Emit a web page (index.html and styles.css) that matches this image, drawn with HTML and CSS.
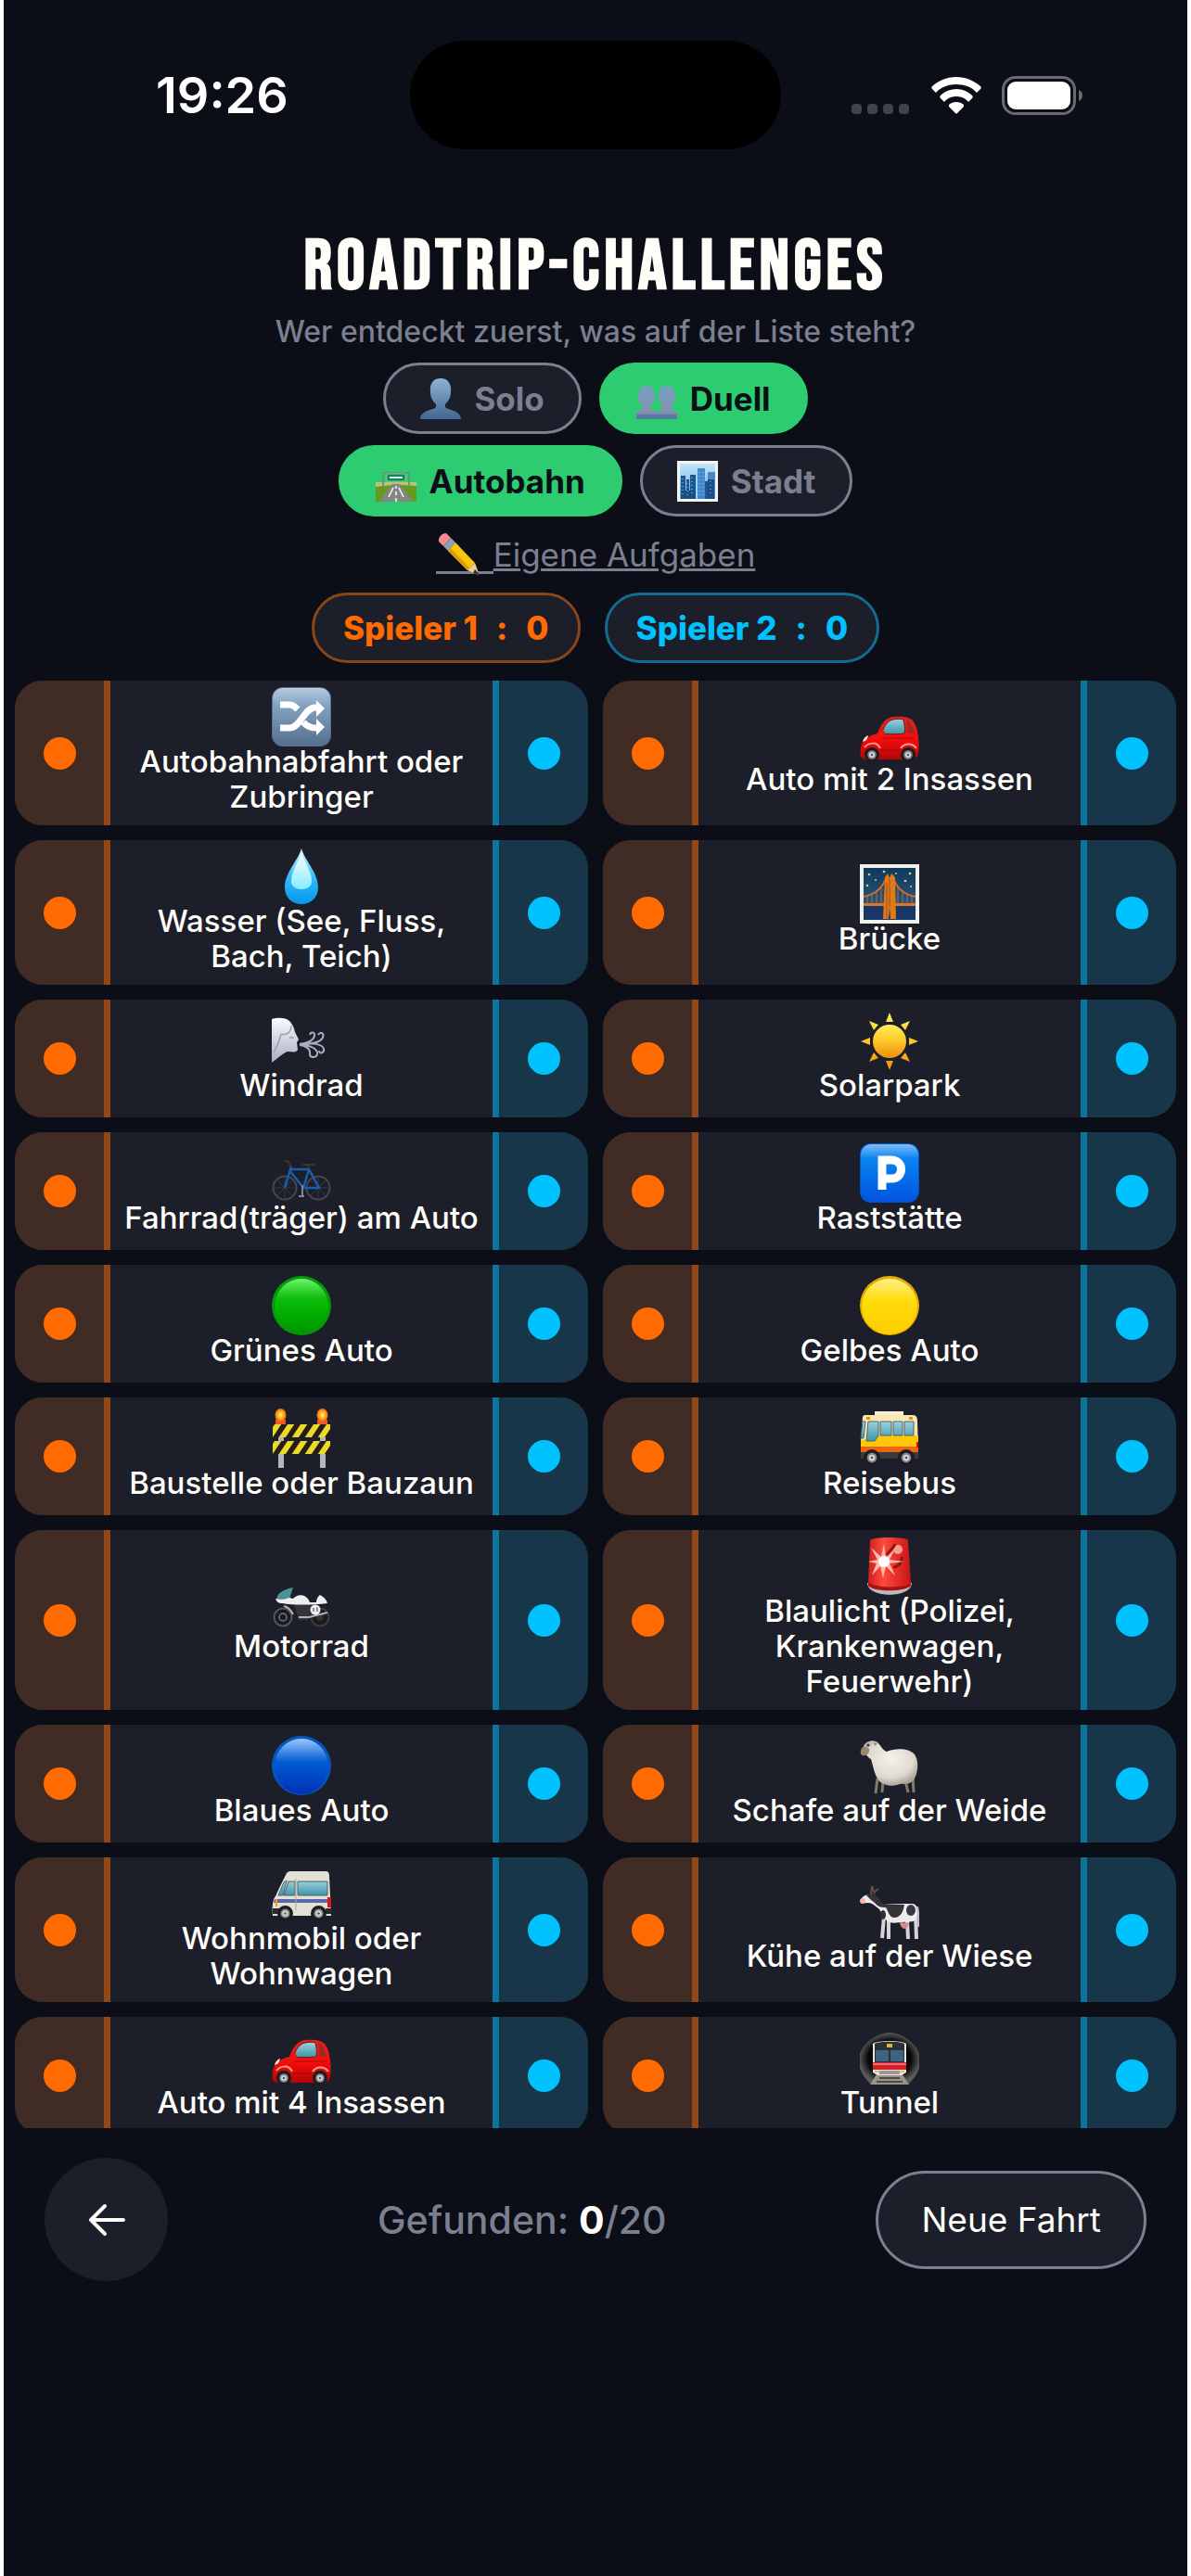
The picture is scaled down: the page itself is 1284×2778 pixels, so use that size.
FILE: index.html
```html
<!DOCTYPE html>
<html lang="de">
<head>
  <meta charset="utf-8">
  <meta name="viewport" content="width=device-width, initial-scale=1">
  <title>Roadtrip-Challenges</title>
  <link rel="stylesheet" href="styles.css">
</head>
<body>
  <!-- shared gradients and symbols -->
  <svg class="sprite" aria-hidden="true">
    <defs>
      <linearGradient id="gSteel" x1="0" y1="0" x2="0" y2="1"><stop offset="0" stop-color="#b9cbe0"/><stop offset=".3" stop-color="#83a2c2"/><stop offset="1" stop-color="#56718f"/></linearGradient>
      <linearGradient id="gPerson" x1="0" y1="0" x2="0" y2="1"><stop offset="0" stop-color="#8db3d3"/><stop offset="1" stop-color="#426790"/></linearGradient>
      <linearGradient id="gPair" x1="0" y1="0" x2="0" y2="1"><stop offset="0" stop-color="#76a1c4"/><stop offset=".8" stop-color="#8790b0"/><stop offset="1" stop-color="#4a6f98"/></linearGradient>
      <linearGradient id="gGreen" x1="0" y1="0" x2="0" y2="1"><stop offset="0" stop-color="#6cf56c"/><stop offset=".35" stop-color="#0fbd0a"/><stop offset=".6" stop-color="#00b000"/><stop offset="1" stop-color="#009400"/></linearGradient>
      <linearGradient id="gYellow" x1="0" y1="0" x2="0" y2="1"><stop offset="0" stop-color="#fff08a"/><stop offset=".4" stop-color="#ffdb0a"/><stop offset="1" stop-color="#ffcd00"/></linearGradient>
      <linearGradient id="gBlue" x1="0" y1="0" x2="0" y2="1"><stop offset="0" stop-color="#9cc6fb"/><stop offset=".42" stop-color="#005cd2"/><stop offset="1" stop-color="#0031b4"/></linearGradient>
      <linearGradient id="gPark" x1="0" y1="0" x2="0" y2="1"><stop offset="0" stop-color="#7dbdfa"/><stop offset=".25" stop-color="#0a84f0"/><stop offset="1" stop-color="#0053e0"/></linearGradient>
      <linearGradient id="gSun" x1="0" y1="0" x2="0" y2="1"><stop offset="0" stop-color="#ffec5e"/><stop offset=".45" stop-color="#fdcb2b"/><stop offset="1" stop-color="#ef8f10"/></linearGradient>
      <linearGradient id="gGlass" x1="0" y1="0" x2="0" y2="1"><stop offset="0" stop-color="#9ad3de"/><stop offset="1" stop-color="#3f94a9"/></linearGradient>
      <linearGradient id="gRed" x1="0" y1="0" x2="0" y2="1"><stop offset="0" stop-color="#d8261c"/><stop offset=".5" stop-color="#f80d0d"/><stop offset="1" stop-color="#b30505"/></linearGradient>
      <linearGradient id="gDrop" x1="0" y1="0" x2="0" y2="1"><stop offset="0" stop-color="#d8f7ff"/><stop offset=".5" stop-color="#35bdf5"/><stop offset="1" stop-color="#0796f0"/></linearGradient>
      <linearGradient id="gShine" x1="0" y1="0" x2="0" y2="1"><stop offset="0" stop-color="#fff"/><stop offset="1" stop-color="#86ecff"/></linearGradient>
      <linearGradient id="gNight" x1="0" y1="0" x2="0" y2="1"><stop offset="0" stop-color="#0d3a5c"/><stop offset=".7" stop-color="#2a5679"/><stop offset="1" stop-color="#162f66"/></linearGradient>
      <linearGradient id="gCity" x1="0" y1="0" x2="0" y2="1"><stop offset="0" stop-color="#c5e6fb"/><stop offset="1" stop-color="#5ea6dc"/></linearGradient>
      <linearGradient id="gFace" x1="0" y1="0" x2="0" y2="1"><stop offset="0" stop-color="#fbfbff"/><stop offset="1" stop-color="#a9adbe"/></linearGradient>
      <linearGradient id="gSiren" x1="0" y1="0" x2="1" y2="0"><stop offset="0" stop-color="#c81e1e"/><stop offset=".35" stop-color="#ff4a3c"/><stop offset="1" stop-color="#c71515"/></linearGradient>
      <radialGradient id="gWool" cx=".5" cy=".4" r=".6"><stop offset="0" stop-color="#f5f2ec"/><stop offset=".7" stop-color="#dedad0"/><stop offset="1" stop-color="#a9a49b"/></radialGradient>
      <radialGradient id="gTube"><stop offset="0" stop-color="#000"/><stop offset=".7" stop-color="#0a0a0a"/><stop offset="1" stop-color="#5a5a5a"/></radialGradient>
      <radialGradient id="gLamp"><stop offset="0" stop-color="#fff7a0"/><stop offset=".5" stop-color="#ffb417"/><stop offset="1" stop-color="#f0680a"/></radialGradient>
      <clipPath id="cBoard"><path d="M1 17h62v14H1zM1 35h62v14H1z"/></clipPath>
      <symbol id="wheel" viewBox="0 0 16 16"><circle cx="8" cy="8" r="8" fill="#1d1d20"/><circle cx="8" cy="8" r="4.8" fill="#85878c"/><circle cx="8" cy="8" r="3" fill="#d4d5d8"/><circle cx="8" cy="8" r="1.2" fill="#55575c"/></symbol>
      <symbol id="car" viewBox="0 0 64 64">
        <path d="M1 51c-1-8 0-15 5-19 4-3 8-5 13-6C23 15 28 9 36 8c9-1 17 0 21 4 4 5 5 11 6 18 1 8 1 15-1 21l-6 3H5z" fill="url(#gRed)"/>
        <path d="M24 25c2-7 6-13 12-14 4-1 8-1 11 0 1 5 2 10 1 15-8 1-16 1-24 0z" fill="url(#gGlass)" stroke="#7b1515" stroke-width="1"/>
        <path d="M50 11c4 2 7 7 9 15h-8c1-5 0-10-1-15z" fill="#9b2a26"/>
        <path d="M5 41c4-5 13-7 17 1M44 42c4-6 13-6 17 0" fill="none" stroke="#ff9d8c" stroke-width="2"/>
        <path d="M3 35c1-4 3-6 6-7-1 4-2 6-6 7z" fill="#ffe3dc"/>
        <ellipse cx="24" cy="26" rx="3" ry="3.500" fill="#ef1515"/>
        <path d="M22 44h21M24 31h34" stroke="#a90808" stroke-width="1"/>
        <use href="#wheel" x="5" y="41" width="16" height="16"/><use href="#wheel" x="44" y="41" width="16" height="16"/>
      </symbol>
    </defs>
  </svg>

  <div class="screen">
    <div class="status-bar">
      <span class="time">19:26</span>
      <span class="island"></span>
      <span class="status-icons">
        <svg width="64" height="42" viewBox="0 0 64 42" fill="#424347"><rect y="30" width="11" height="11" rx="4"/><rect x="17" y="30" width="11" height="11" rx="4"/><rect x="34" y="30" width="11" height="11" rx="4"/><rect x="51" y="30" width="11" height="11" rx="4"/></svg>
        <svg width="54" height="42" viewBox="0 0 54 42" fill="#fff"><path d="M27 1c10 0 19 4 26 10 1 1 1 2 0 3l-4 4c-5-6-13-9-22-9S10 12 5 18l-4-4c-1-1-1-2 0-3C8 5 17 1 27 1z"/><path d="M27 14c7 0 13 3 17 7 1 1 1 2 0 3l-4 4c-3-4-8-6-13-6s-10 2-13 6l-4-4c-1-1-1-2 0-3 4-4 10-7 17-7z"/><path d="M27 28c3 0 6 1 8 3v2l-7 7c-1 1-1 1-2 0l-7-7v-2c2-2 5-3 8-3z"/></svg>
        <svg width="88" height="42" viewBox="0 0 88 42"><rect x="1.500" y="1.500" width="77" height="39" rx="13" fill="none" stroke="#6a6b70" stroke-width="3"/><rect x="6" y="6" width="68" height="30" rx="9" fill="#fff"/><path d="M83 15c3 1 4 3 4 6s-1 5-4 6z" fill="#6a6b70"/></svg>
      </span>
    </div>

    <header class="header">
      <h1>ROADTRIP-CHALLENGES</h1>
      <p class="subtitle">Wer entdeckt zuerst, was auf der Liste steht?</p>
      <div class="pill-row">
        <button type="button" class="pill" aria-pressed="false">
          <svg class="pill-icon" viewBox="0 0 44 44"><path d="M22 0c8 0 12 6 11 15 0 6-3 10-6 13v3c1 3 17 3 17 13H0c0-10 16-10 17-13v-3c-3-3-6-7-6-13C10 6 14 0 22 0z" fill="url(#gPerson)"/></svg>
          Solo
        </button>
        <button type="button" class="pill active" aria-pressed="true">
          <svg class="pill-icon" viewBox="0 0 44 44"><path d="M11 8c6 0 9 5 9 11 0 5-2 8-4 10v4c1 1 5 2 6 3 1-1 5-2 6-3v-4c-2-2-4-5-4-10 0-6 3-11 9-11s9 5 9 11c0 5-2 8-4 10v4c2 2 6 2 6 5v6H0v-6c0-3 4-3 6-5v-4c-2-2-4-5-4-10C2 13 5 8 11 8z" fill="url(#gPair)"/><path d="M0 39h44v5H0z" fill="#587aa3"/></svg>
          Duell
        </button>
      </div>
      <div class="pill-row">
        <button type="button" class="pill active" aria-pressed="true">
          <svg class="pill-icon" viewBox="0 0 44 44"><path d="M0 23h44v21H0z" fill="#68981f"/><path d="M0 23h44v4l-18-1h-8L0 28z" fill="#c3bf73"/><path d="M18 25h8l14 19H4z" fill="#858585"/><path d="M22 27v3M22 33v4M22 40v4M19 29l-5 10M25 29l5 10" stroke="#fff" stroke-width="1.500"/><path d="M8 28V13h28v15" fill="none" stroke="#5e9a77" stroke-width="2"/><path d="M12 14h20v8H12z" fill="#138656" stroke="#86c9a4"/><path d="M15 18h14" stroke="#d5f2e2" stroke-width="2"/></svg>
          Autobahn
        </button>
        <button type="button" class="pill" aria-pressed="false">
          <svg class="pill-icon" viewBox="0 0 44 44"><path d="M0 0h44v44H0z" fill="#f4f4f4"/><path d="M3 3h38v38H3z" fill="url(#gCity)"/><path d="M4 16h5v25H4zM10 20h3v21h-3zM14 15h6v26h-6zM29 22h5v19h-5z" fill="#1d5593"/><path d="M22 8h8v33h-8zM33 12h8v29h-8z" fill="#4189c9"/><path d="M33 20h7v21h-7zM4 32h17v9H4z" fill="#1c4c85"/><path d="M20 19h2v22h-2z" fill="#8fd8ff"/><path d="M6 19v18M16 18v18M24 12v26M28 12v26M36 22v16M11 24v14" stroke="#a8d4f5" stroke-width="1" stroke-dasharray="1 3"/></svg>
          Stadt
        </button>
      </div>
      <!-- the icon carries its own piece of the underline -->
      <a class="custom-link" href="#"><svg class="pencil" viewBox="0 0 62 52"><path d="M0 44h62v3H0z" fill="#7b7f90"/><path d="M3 12c-1-4 3-9 8-9l5 5-8 9z" fill="#f4898d"/><path d="M8 17l8-9 5 5-8 9z" fill="#8ba0b4"/><path d="M13 22l8-9 21 22-8 8z" fill="#fbc50b"/><path d="M13 22l3-3 21 22-3 2z" fill="#e19b05"/><path d="M42 35l-8 8 11 5c1 0 2-1 1-2z" fill="#efcb92"/><path d="M46 46l-4-4-2 4 5 2c1 0 2-1 1-2z" fill="#353535"/></svg>Eigene Aufgaben</a>
      <div class="score-row">
        <div class="score player-one"><span>Spieler 1</span><span>:</span><span>0</span></div>
        <div class="score player-two"><span>Spieler 2</span><span>:</span><span>0</span></div>
      </div>
    </header>

    <ul class="board">
      <li class="card">
        <button type="button" class="side side-one" aria-label="Spieler 1"></button>
        <div class="task">
          <svg class="task-icon" viewBox="0 0 64 64"><rect width="64" height="64" rx="12" fill="#56708d"/><rect x="1" y="1" width="62" height="61" rx="11" fill="url(#gSteel)"/><path d="M9 20h10c4 0 6 2 9 5M9 45h10c12 0 16-22 28-22h3M34 39c4 4 7 6 13 6h3" transform="translate(0 -1)" fill="none" stroke="#fff" stroke-width="7"/><path d="M48 14l9 9-9 9zM48 34l9 9-9 9z" fill="#fff"/></svg>
          <span>Autobahnabfahrt oder Zubringer</span>
        </div>
        <button type="button" class="side side-two" aria-label="Spieler 2"></button>
      </li>
      <li class="card">
        <button type="button" class="side side-one" aria-label="Spieler 1"></button>
        <div class="task">
          <svg class="task-icon" viewBox="0 0 64 64"><use href="#car" y="5" width="64" height="64"/></svg>
          <span>Auto mit 2 Insassen</span>
        </div>
        <button type="button" class="side side-two" aria-label="Spieler 2"></button>
      </li>
      <li class="card">
        <button type="button" class="side side-one" aria-label="Spieler 1"></button>
        <div class="task">
          <svg class="task-icon" viewBox="0 0 64 64"><path d="M32 2c3 12 18 26 18 42 0 11-8 18-18 18s-18-7-18-18C14 28 29 14 32 2z" fill="url(#gDrop)"/><path d="M32 6c2 9 11 20 11 31 0 6-5 9-11 9s-11-3-11-9c0-11 9-22 11-31z" fill="url(#gShine)"/></svg>
          <span>Wasser (See, Fluss, Bach, Teich)</span>
        </div>
        <button type="button" class="side side-two" aria-label="Spieler 2"></button>
      </li>
      <li class="card">
        <button type="button" class="side side-one" aria-label="Spieler 1"></button>
        <div class="task">
          <svg class="task-icon" viewBox="0 0 64 64"><path d="M0 0h64v64H0z" fill="#f3f1ee"/><path d="M4 4h56v56H4z" fill="url(#gNight)"/><path d="M4 44h56v16H4z" fill="#183667"/><path d="M4 35C16 33 25 25 29 13M60 35C48 33 39 25 35 13" fill="none" stroke="#d96a28" stroke-width="2"/><path d="M8 34v9M13 32v11M18 28v15M23 24v19M41 24v19M46 28v15M51 32v11M56 34v9" stroke="#b96c3c" stroke-width="1"/><path d="M4 42h56v3H4z" fill="#d9762a"/><path d="M27 14l3-4 2 5 2-5 4 4 1 45h-6l-1-13-1 13h-6z" fill="#e07a17"/><path d="M32 16v30M29 20v38" stroke="#a34c0c" stroke-width="1"/><g fill="#e5cf5a"><circle cx="10" cy="11" r="1.300"/><circle cx="26" cy="8" r="1.300"/><circle cx="39" cy="10" r="1"/><circle cx="54" cy="10" r="1.300"/><circle cx="49" cy="18" r="1.300"/><circle cx="8" cy="23" r="1.300"/><circle cx="17" cy="17" r="1"/><circle cx="55" cy="24" r="1"/></g></svg>
          <span>Brücke</span>
        </div>
        <button type="button" class="side side-two" aria-label="Spieler 2"></button>
      </li>
      <li class="card">
        <button type="button" class="side side-one" aria-label="Spieler 1"></button>
        <div class="task">
          <svg class="task-icon" viewBox="0 0 64 64"><path d="M0 9c6-2 15-2 19 2 3 3 5 7 6 12l4 8-2 3 1 8c-2 4-7 2-11 2-5 2-9 6-17 12z" fill="url(#gFace)"/><path d="M10 25c6 2 11-2 11-9M10 25c-2 8-4 14-8 20M19 29h5" fill="none" stroke="#9a9fb2" stroke-width="1.500"/><g fill="none" stroke="#a9adbb" stroke-width="2"><path d="M30 36c8-1 15-4 16-9 1-4-4-5-5-1M30 36c12 0 22-1 25-7 2-5-3-7-5-3M30 37c7 1 12 4 11 10 0 4 7 4 8 0 1-5-7-11-19-10M32 36c10-2 23 0 24 5 1 5-5 6-5 2"/></g></svg>
          <span>Windrad</span>
        </div>
        <button type="button" class="side side-two" aria-label="Spieler 2"></button>
      </li>
      <li class="card">
        <button type="button" class="side side-one" aria-label="Spieler 1"></button>
        <div class="task">
          <svg class="task-icon" viewBox="0 0 64 64"><g fill="url(#gSun)"><circle cx="32" cy="33" r="18"/><path d="M32 2l4 10h-8zM32 64l4-10h-8zM1 33l10-4v8zM63 33l-10-4v8zM10 11l10 4-5 6zM54 11l-10 4 5 6zM10 55l10-4-5-6zM54 55l-10-4 5-6z"/></g></svg>
          <span>Solarpark</span>
        </div>
        <button type="button" class="side side-two" aria-label="Spieler 2"></button>
      </li>
      <li class="card">
        <button type="button" class="side side-one" aria-label="Spieler 1"></button>
        <div class="task">
          <svg class="task-icon" viewBox="0 0 64 64"><g fill="none" stroke="#45474e" stroke-width="2"><circle cx="14" cy="48" r="12.500"/><circle cx="50" cy="48" r="12.500"/></g><path d="M14 36v24M2 48h24M6 40l16 16M22 40L6 56M50 36v24M38 48h24M42 40l16 16M58 40L42 56" stroke="#36383f" stroke-width="1"/><path d="M14 48l7-23M19 28h21M19 29l15 19h17L40 28l-6 20" fill="none" stroke="#1b5cae" stroke-width="2.500"/><path d="M14 20c2-2 5-1 6 5M33 23h13M40 28l-1-5" fill="none" stroke="#3d3433" stroke-width="2"/><path d="M33 45v12M29 57h6" stroke="#85868c" stroke-width="2"/></svg>
          <span>Fahrrad(träger) am Auto</span>
        </div>
        <button type="button" class="side side-two" aria-label="Spieler 2"></button>
      </li>
      <li class="card">
        <button type="button" class="side side-one" aria-label="Spieler 1"></button>
        <div class="task">
          <svg class="task-icon" viewBox="0 0 64 64"><rect width="64" height="64" rx="12" fill="#0057c8"/><rect x="1" y="1" width="62" height="62" rx="11" fill="url(#gPark)"/><path d="M24 50V18h10c14 0 14 20 0 20H24" fill="none" stroke="#fff" stroke-width="9"/></svg>
          <span>Raststätte</span>
        </div>
        <button type="button" class="side side-two" aria-label="Spieler 2"></button>
      </li>
      <li class="card">
        <button type="button" class="side side-one" aria-label="Spieler 1"></button>
        <div class="task">
          <svg class="task-icon" viewBox="0 0 64 64"><circle cx="32" cy="32" r="32" fill="#059a08"/><ellipse cx="32" cy="33" rx="29" ry="30" fill="url(#gGreen)"/></svg>
          <span>Grünes Auto</span>
        </div>
        <button type="button" class="side side-two" aria-label="Spieler 2"></button>
      </li>
      <li class="card">
        <button type="button" class="side side-one" aria-label="Spieler 1"></button>
        <div class="task">
          <svg class="task-icon" viewBox="0 0 64 64"><circle cx="32" cy="32" r="32" fill="#e6ab00"/><ellipse cx="32" cy="33" rx="30" ry="30" fill="url(#gYellow)"/></svg>
          <span>Gelbes Auto</span>
        </div>
        <button type="button" class="side side-two" aria-label="Spieler 2"></button>
      </li>
      <li class="card">
        <button type="button" class="side side-one" aria-label="Spieler 1"></button>
        <div class="task">
          <svg class="task-icon" viewBox="0 0 64 64"><path d="M7 30h6v34H7zM52 30h6v34h-6z" fill="#b5b5bb"/><path d="M1 17h62v14H1zM1 35h62v14H1z" fill="#231f17"/><g clip-path="url(#cBoard)" stroke="#ead92a" stroke-width="6"><path d="M-4 33L8 15M10 33l12-18M24 33l12-18M38 33l12-18M52 33l12-18M-4 51L8 33M10 51l12-18M24 51l12-18M38 51l12-18M52 51l12-18"/></g><path d="M4 12h11v5H4zM49 12h11v5H49z" fill="#f0572c"/><ellipse cx="9.500" cy="7" rx="6" ry="7" fill="url(#gLamp)"/><ellipse cx="54.500" cy="7" rx="6" ry="7" fill="url(#gLamp)"/></svg>
          <span>Baustelle oder Bauzaun</span>
        </div>
        <button type="button" class="side side-two" aria-label="Spieler 2"></button>
      </li>
      <li class="card">
        <button type="button" class="side side-one" aria-label="Spieler 1"></button>
        <div class="task">
          <svg class="task-icon" viewBox="0 0 64 64"><path d="M16 3h31v5H16z" fill="#f8eecb"/><path d="M3 9c1-2 2-2 4-2h50c4 0 5 3 5 6l1 37H1V36z" fill="#f6e7b5"/><path d="M1 40V35l8-3 10-3h44v12H1z" fill="#ffc60b"/><path d="M1 41h62v6H1z" fill="#f0650f"/><path d="M1 47h62v7H1z" fill="#3b3b3d"/><path d="M3 14h3l-2 18H1zM9 14h11v15l-4 6H7zM22 14h12v15H22zM36 14h10v15H36zM48 14h10v15H48z" fill="url(#gGlass)" stroke="#54656b" stroke-width="1"/><path d="M7 9h4v3H7zM53 9h4v3h-4z" fill="#ef8a12"/><path d="M61 36h2v6h-2z" fill="#d81010"/><use href="#wheel" x="4" y="44" width="18" height="18"/><use href="#wheel" x="41" y="44" width="18" height="18"/></svg>
          <span>Reisebus</span>
        </div>
        <button type="button" class="side side-two" aria-label="Spieler 2"></button>
      </li>
      <li class="card">
        <button type="button" class="side side-one" aria-label="Spieler 1"></button>
        <div class="task">
          <svg class="task-icon" viewBox="0 0 64 64"><circle cx="12" cy="49" r="9.500" fill="#1b1b1e" stroke="#55565c" stroke-width="2"/><circle cx="52" cy="49" r="9.500" fill="#1b1b1e" stroke="#3c3d42" stroke-width="2"/><circle cx="12" cy="49" r="4" fill="none" stroke="#77797f" stroke-width="1.500"/><circle cx="52" cy="49" r="4" fill="#303136"/><path d="M24 35h22l-7 17H29z" fill="#34353a"/><path d="M13 37c5 1 8 5 10 9M29 49h11l20-5" fill="none" stroke="#b3b4b8" stroke-width="2"/><path d="M5 30c1-7 7-11 18-13l-4 12z" fill="#4c9397"/><path d="M4 29c6 1 10 1 15-1l4 1c5-6 15-5 18 4h7c0-3 2-7 4-8 4 2 7 5 8 9-17 2-37 2-49 0-4 0-6-2-7-5z" fill="#eeeef0"/><circle cx="47" cy="41" r="5.500" fill="#f0f0f0"/><path d="M45 39v4M48 39h1v4" stroke="#333" stroke-width="1" fill="none"/></svg>
          <span>Motorrad</span>
        </div>
        <button type="button" class="side side-two" aria-label="Spieler 2"></button>
      </li>
      <li class="card">
        <button type="button" class="side side-one" aria-label="Spieler 1"></button>
        <div class="task">
          <svg class="task-icon" viewBox="0 0 64 64"><path d="M8 50c0 17 48 17 48 0z" fill="#b8babf"/><path d="M11 4c2-4 39-4 41 0l3 46c-5 8-42 8-46 0z" fill="url(#gSiren)"/><path d="M9 49c5 7 41 7 46 1v3c-6 7-41 7-46 0z" fill="#a91212"/><ellipse cx="41" cy="14" rx="5" ry="5" fill="#ff9c90"/><path d="M36 33c6 0 10-6 9-11M29 20c3-5 8-8 9-12" stroke="#8f1414" stroke-width="3" fill="none"/><path d="M26 8l2 15 10-10-6 12 16 2-16 2 6 13-10-10-3 13-3-13-9 10 5-13-9-2 10-2-7-13 11 10z" fill="#ffb9ae"/><circle cx="26" cy="27" r="6" fill="#fff"/></svg>
          <span>Blaulicht (Polizei, Krankenwagen, Feuerwehr)</span>
        </div>
        <button type="button" class="side side-two" aria-label="Spieler 2"></button>
      </li>
      <li class="card">
        <button type="button" class="side side-one" aria-label="Spieler 1"></button>
        <div class="task">
          <svg class="task-icon" viewBox="0 0 64 64"><circle cx="32" cy="32" r="32" fill="#0457bf"/><ellipse cx="32" cy="33" rx="29" ry="30" fill="url(#gBlue)"/></svg>
          <span>Blaues Auto</span>
        </div>
        <button type="button" class="side side-two" aria-label="Spieler 2"></button>
      </li>
      <li class="card">
        <button type="button" class="side side-one" aria-label="Spieler 1"></button>
        <div class="task">
          <svg class="task-icon" viewBox="0 0 64 64"><path d="M19 46l-2 16M25 48l-1 13M49 48l3 13M57 44l1 17" stroke="#857a6b" stroke-width="3"/><path d="M4 11c2-6 12-8 16-3 3 3 5 8 9 9 9-4 24-4 30 3 5 7 4 20-1 28-6 6-12 2-18 5-7 2-13 0-18-3-6-6-7-15-10-25-4-2-7-6-8-14z" fill="url(#gWool)"/><path d="M3 12c4-1 8 1 7 5-1 3-4 5-7 4-3 0-3-6 0-9z" fill="#9b8570"/><circle cx="9" cy="10" r="1.500" fill="#333"/><path d="M15 7l4 1-3 3z" fill="#8d8477"/></svg>
          <span>Schafe auf der Weide</span>
        </div>
        <button type="button" class="side side-two" aria-label="Spieler 2"></button>
      </li>
      <li class="card">
        <button type="button" class="side side-one" aria-label="Spieler 1"></button>
        <div class="task">
          <svg class="task-icon" viewBox="0 0 64 64"><path d="M15 12c1-3 3-4 5-4h38c3 0 4 2 4 5l2 43H1c-1-8 0-18 3-21l5-11z" fill="#e3e0d6"/><path d="M3 38h61v4H2z" fill="#5c69a9"/><path d="M1 48h8v6H1zM58 48h6v6h-6z" fill="#2b2c30"/><path d="M4 38h2v8H4z" fill="#f2a01c"/><path d="M60 36h4v11h-4z" fill="#df1414"/><path d="M13 20l3-2-4 16H7zM18 19h7v15H13zM28 19h32v15H28z" fill="url(#gGlass)" stroke="#506168" stroke-width="1"/><path d="M26 16v34" stroke="#a9a69c" stroke-width="1"/><use href="#wheel" x="6" y="45" width="17" height="17"/><use href="#wheel" x="42" y="45" width="17" height="17"/></svg>
          <span>Wohnmobil oder Wohnwagen</span>
        </div>
        <button type="button" class="side side-two" aria-label="Spieler 2"></button>
      </li>
      <li class="card">
        <button type="button" class="side side-one" aria-label="Spieler 1"></button>
        <div class="task">
          <svg class="task-icon" viewBox="0 0 64 64"><path d="M26 38l-2 23M31 40v22M51 42l1 20M60 34l1 28" stroke="#d6d4d8" stroke-width="4"/><path d="M2 18c2-3 7-5 12-3 4 1 7 8 11 10 10-1 21-1 31-1 7 0 7 8 5 16-2 4-6 3-10 4-8-1-13 2-19 0-7-3-8-10-11-14-4-3-7-7-12-7-5 1-9 0-7-5z" fill="#ecebee"/><path d="M7 15l6-3c5 1 8 8 12 13h23c-1 7-4 14-11 14-5 0-6-6-9-11-6 0-9-1-12-5-3-2-6-5-9-8z" fill="#353338"/><path d="M12 14l1-9 3 8M15 12l5-4" stroke="#65504b" stroke-width="2" fill="none"/><circle cx="3" cy="21" r="3" fill="#f4b5b0"/><ellipse cx="25" cy="36" rx="3" ry="5" fill="#2f2d33"/><ellipse cx="55" cy="31" rx="5" ry="6" fill="#39373d"/><path d="M43 44c1 8 8 10 10 1z" fill="#d9898a"/><path d="M62 27c2 8 1 15 1 22" stroke="#bfbec4" stroke-width="2" fill="none"/></svg>
          <span>Kühe auf der Wiese</span>
        </div>
        <button type="button" class="side side-two" aria-label="Spieler 2"></button>
      </li>
      <li class="card">
        <button type="button" class="side side-one" aria-label="Spieler 1"></button>
        <div class="task">
          <svg class="task-icon" viewBox="0 0 64 64"><use href="#car" y="5" width="64" height="64"/></svg>
          <span>Auto mit 4 Insassen</span>
        </div>
        <button type="button" class="side side-two" aria-label="Spieler 2"></button>
      </li>
      <li class="card">
        <button type="button" class="side side-one" aria-label="Spieler 1"></button>
        <div class="task">
          <svg class="task-icon" viewBox="0 0 64 64"><path d="M12 61C-20 30 14 5 32 5s52 25 20 56z" fill="url(#gTube)"/><path d="M18 50l-7 11h42l-7-11z" fill="#98948c"/><path d="M21 54h22M18 58h28" stroke="#4c4a46" stroke-width="2"/><path d="M14 17c5-4 31-4 36 0v31l-5 3H19l-5-3z" fill="#e9e7e3"/><path d="M16 17c5-3 27-3 32 0v20H16z" fill="#2d2f33"/><path d="M17 24h14v12H17zM33 24h14v12H33z" fill="#3d6482"/><path d="M14 37h36v8H14z" fill="#d81e24"/><path d="M14 39h36" stroke="#f5c9c9" stroke-width="1"/><path d="M29 17h6v4h-6z" fill="#d5b83c"/><path d="M16 46h5v2h-5zM43 46h5v2h-5z" fill="#e6bd66"/><path d="M21 46h22v4H21z" fill="#9a9894"/></svg>
          <span>Tunnel</span>
        </div>
        <button type="button" class="side side-two" aria-label="Spieler 2"></button>
      </li>
    </ul>

    <footer class="footer">
      <button type="button" class="back" aria-label="Zurück">
        <svg width="44" height="44" viewBox="0 0 44 44" fill="none" stroke="#fffdf7" stroke-width="4" stroke-linecap="round" stroke-linejoin="round"><path d="M20 7L5 22l15 15M5 22h35"/></svg>
      </button>
      <p class="found">Gefunden: <strong>0</strong>/20</p>
      <button type="button" class="new-trip">Neue Fahrt</button>
    </footer>
  </div>
</body>
</html>
```

FILE: styles.css
```css
* {
  box-sizing: border-box;
}

body {
  margin: 0;
  background-color: #fff;
  color: #fffdf7;
  font-family: Inter, "Liberation Sans", sans-serif;
}

button {
  margin: 0;
  font-family: inherit;
  cursor: pointer;
}

.sprite {
  position: absolute;
  width: 0;
  height: 0;
}

.screen {
  display: flex;
  flex-direction: column;
  height: 100vh;
  margin: 0 4px;
  background-color: #0b0e16;
  overflow: hidden;
}

/* Status bar */
.status-bar {
  display: grid;
  grid-template-columns: 1fr 400px 1fr;
  align-items: center;
  padding-top: 44px;
}

.time {
  padding-left: 164px;
  color: #fff;
  font-size: 54px;
  font-weight: 600;
}

.island {
  height: 117px;
  border-radius: 59px;
  background-color: #000;
}

.status-icons {
  display: flex;
  justify-content: flex-end;
  gap: 22px;
  padding-right: 112px;
}

/* Header */
.header {
  display: flex;
  flex-direction: column;
  align-items: center;
  padding-top: 88px;
}

h1 {
  margin: 0;
  font-family: "Bebas Neue", "Liberation Sans Narrow", "Roboto Condensed", "Liberation Sans", sans-serif;
  font-size: 76px;
  font-weight: 700;
  letter-spacing: 5px;
  line-height: 80px;
}

.subtitle {
  margin: 10px 0 14px;
  color: #7b7f90;
  font-size: 32px;
  font-weight: 500;
  line-height: 38px;
}

.pill-row {
  display: flex;
  gap: 19px;
  margin-bottom: 12px;
}

.pill {
  display: flex;
  align-items: center;
  gap: 14px;
  height: 77px;
  padding: 0 37px;
  border: 3px solid #7b7f90;
  border-radius: 39px;
  background-color: #1c1e2a;
  color: #7b7f90;
  font-size: 35px;
  font-weight: 700;
}

.pill.active {
  border-color: #2ecc71;
  background-color: #2ecc71;
  color: #0b0e16;
}

.pill-icon {
  width: 44px;
  height: 44px;
}

.custom-link {
  display: flex;
  align-items: center;
  margin: 9px 0 21px;
  color: #7b7f90;
  font-size: 35px;
  line-height: 40px;
  text-decoration-thickness: 3px;
}

.pencil {
  width: 62px;
  height: 52px;
  margin: -6px 0;
}

.score-row {
  display: flex;
  gap: 26px;
}

.score {
  display: flex;
  align-items: center;
  gap: 20px;
  height: 76px;
  padding: 0 31px;
  border: 3px solid;
  border-radius: 38px;
  background-color: #1c1e2a;
  font-size: 35px;
  font-weight: 800;
}

.player-one {
  border-color: #8a4519;
  color: #ff6b00;
}

.player-two {
  border-color: #126c90;
  color: #00c2ff;
}

/* Task list */
.board {
  display: grid;
  flex: 1;
  grid-template-columns: 1fr 1fr;
  grid-auto-rows: max-content;
  align-content: start;
  gap: 16px;
  min-height: 0;
  margin: 19px 0 0;
  padding: 0 12px;
  list-style: none;
  overflow: hidden;
}

.card {
  display: flex;
  min-height: 127px;
  border-radius: 30px;
  background-color: #1c1e2a;
  overflow: hidden;
}

.side {
  display: flex;
  flex: none;
  align-items: center;
  justify-content: center;
  width: 103px;
  padding: 0;
  border: 0 solid;
}

.side::before {
  content: "";
  width: 35px;
  height: 35px;
  border-radius: 50%;
}

.side-one {
  border-right: 7px solid #944716;
  background-color: #402b25;
}

.side-one::before {
  background-color: #ff6b00;
}

.side-two {
  border-left: 7px solid #0c749d;
  background-color: #17364a;
}

.side-two::before {
  background-color: #00c2ff;
}

.task {
  display: flex;
  flex: 1;
  flex-direction: column;
  align-items: center;
  justify-content: center;
  padding: 12px 14px;
  font-size: 33px;
  font-weight: 500;
  line-height: 38px;
  text-align: center;
}

.task-icon {
  flex: none;
  width: 64px;
  height: 64px;
  margin: -5px 0 -3px;
}

/* Footer */
.footer {
  display: flex;
  align-items: center;
  justify-content: space-between;
  padding: 32px 44px 318px;
}

.back {
  display: flex;
  align-items: center;
  justify-content: center;
  width: 133px;
  height: 133px;
  border: 0;
  border-radius: 50%;
  background-color: #1c1e2a;
}

.found {
  margin: 0;
  color: #7b7f90;
  font-size: 41px;
  font-weight: 500;
}

.found strong {
  color: #fffdf7;
  font-weight: 700;
}

.new-trip {
  height: 106px;
  padding: 0 46px;
  border: 3px solid #7b7f90;
  border-radius: 53px;
  background-color: #1c1e2a;
  color: #fffdf7;
  font-size: 37px;
  font-weight: 400;
}
```
